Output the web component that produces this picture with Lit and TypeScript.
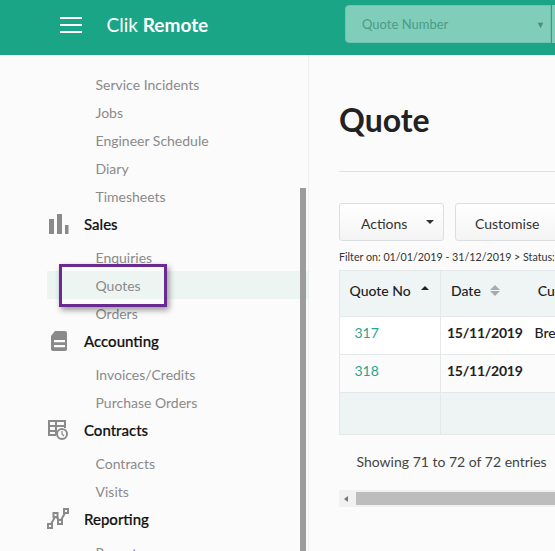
import { LitElement, html, css, svg } from "lit";
import { customElement } from "lit/decorators.js";

const icons = {
  sales: svg`<svg width="22" height="22" viewBox="0 0 22 22"><g fill="#8a8a8a"><rect x="2" y="6" width="5" height="15"/><rect x="10" y="1" width="5" height="20"/><rect x="18" y="12" width="3.500" height="9"/></g></svg>`,
  accounting: svg`<svg width="22" height="22" viewBox="0 0 22 22"><path fill="#8a8a8a" d="M8 1h10a2 2 0 0 1 2 2v16a2 2 0 0 1-2 2H6a2 2 0 0 1-2-2V6z"/><path fill="#fbfbfb" d="M7 10h11v2.200H7zM7 15h11v2.200H7z"/></svg>`,
  contracts: svg`<svg width="22" height="22" viewBox="0 0 22 22"><g fill="none" stroke="#8a8a8a" stroke-width="2"><path d="M9 16H2V2h16v7"/><path d="M2 7h16M2 12h7M9 2v14"/><circle cx="15" cy="15" r="5"/><path stroke-width="1.300" d="M15 12v3l2 2"/></g></svg>`,
  reporting: svg`<svg width="22" height="22" viewBox="0 0 22 22"><g fill="none" stroke="#8a8a8a" stroke-width="2"><rect x="1" y="16" width="4" height="4"/><rect x="6.500" y="5" width="4" height="4"/><rect x="11" y="12" width="4" height="4"/><rect x="17" y="1" width="4" height="4"/><path d="M4 16 8 9M9.500 9l2.500 3M14 12l4-7"/></g></svg>`,
};

type Entry = { label: string; icon?: keyof typeof icons; active?: boolean };
const nav: Entry[] = [
  { label: "Service Incidents" }, { label: "Jobs" }, { label: "Engineer Schedule" }, { label: "Diary" }, { label: "Timesheets" },
  { label: "Sales", icon: "sales" }, { label: "Enquiries" }, { label: "Quotes", active: true }, { label: "Orders" },
  { label: "Accounting", icon: "accounting" }, { label: "Invoices/Credits" }, { label: "Purchase Orders" },
  { label: "Contracts", icon: "contracts" }, { label: "Contracts" }, { label: "Visits" },
  { label: "Reporting", icon: "reporting" }, { label: "Reports" },
];

@customElement("app-root")
export class AppRoot extends LitElement {
  static styles = css`
    :host { display: block; width: 555px; height: 551px; overflow: hidden; position: relative; background: #fbfbfb; font-family: Lato, sans-serif; }
    .top { height: 55px; background: #1aa587; display: flex; align-items: center; color: #fff; white-space: nowrap; overflow: hidden; }
    .burger { flex: none; width: 22px; margin-left: 60px; margin-top: -5px; display: flex; flex-direction: column; gap: 5px; }
    .burger i { display: block; height: 2px; background: #fff; }
    .brand { margin-left: 24.500px; margin-top: -7px; font-size: 19px; width: 238.500px; flex: none; }
    .brand b { font-weight: 700; }
    .select { flex: none; width: 206px; height: 38px; margin-top: -7px; box-sizing: border-box; background: #80cdb9; border: 1px solid #6fc5af; border-radius: 4px 0 0 4px; display: flex; align-items: center; justify-content: space-between; padding: 0 5px 0 16px; font-size: 13px; color: #4c9c87; }
    .select span { font-size: 9px; color: #4c8c7c; }
    .select2 { flex: none; width: 20px; height: 38px; margin-top: -7px; margin-left: 1px; background: #80cdb9; }
    .body { display: flex; height: 496px; }
    .side { width: 309px; flex: none; box-sizing: border-box; border-right: 1px solid #eeeeee; padding-top: 15px; overflow: hidden; }
    .item { height: 28px; margin-left: 47px; padding-left: 48.500px; display: flex; align-items: center; font-size: 14px; color: #8a8a8a; }
    .item.active { background: #edf5f3; }
    .head { height: 28px; display: flex; align-items: center; font-size: 15px; font-weight: 500; color: #111; margin-bottom: 5px; margin-left: 47px; gap: 15px; -webkit-text-stroke: 0.2px #111; }
    .head svg { display: block; margin-bottom: 1px; }
    .main { flex: 1; min-width: 0; padding-left: 30px; overflow: hidden; white-space: nowrap; }
    h1 { margin: 42px 0 0; font-size: 32px; line-height: 46px; font-weight: 700; color: #222; }
    .rule { height: 1px; background: #dde2e1; margin-top: 28px; width: 260px; }
    .tools { display: flex; gap: 11px; margin-top: 31px; }
    .btn { height: 38px; box-sizing: border-box; border: 1px solid #dcdfdf; border-radius: 3px; background: linear-gradient(#ffffff, #f4f4f4); display: flex; align-items: center; font-size: 14px; color: #333; padding-left: 21px; padding-top: 2px; flex: none; }
    .b1 { width: 105px; gap: 19px; }
    .b2 { width: 130px; padding-left: 19px; }
    .caret { width: 0; height: 0; margin-top: -3px; border-left: 4px solid transparent; border-right: 4px solid transparent; border-top: 4px solid #333; }
    .filter { font-size: 10.700px; line-height: 14px; margin-top: 9px; color: #333; }
    .table { display: grid; grid-template-columns: 101px 1fr; grid-template-rows: 46px 38px 38px 42px; margin-top: 6px; width: 260px; border-top: 1px solid #e4e8e8; border-left: 1px solid #e4e8e8; box-sizing: border-box; font-size: 14px; color: #333; }
    .c { display: flex; align-items: center; border-bottom: 1px solid #e4e8e8; border-right: 1px solid #e4e8e8; box-sizing: border-box; overflow: hidden; background: #fff; }
    .h { background: #eff4f4; font-weight: 500; color: #222; padding: 0 0 6px 9.500px; gap: 10px; }
    .h .up { margin-top: -5px; width: 0; height: 0; border-left: 4.500px solid transparent; border-right: 4.500px solid transparent; border-bottom: 4.500px solid #222; }
    .sort { display: flex; flex-direction: column; gap: 1.500px; }
    .sort i { display: block; width: 0; height: 0; border-left: 5px solid transparent; border-right: 5px solid transparent; }
    .sort i:first-child { border-bottom: 5px solid #aaa; }
    .sort i:last-child { border-top: 5px solid #aaa; }
    .h2 { padding-left: 10px; gap: 9px; }
    .cu { margin-left: 29px; }
    .num { padding: 0 0 6px 14.500px; color: #1fa78f; }
    .date { padding: 0 0 6px 6px; font-weight: 700; gap: 12px; color: #222; letter-spacing: -0.25px; }
    .date span { font-weight: 500; letter-spacing: 0; }
    .white2 { background: #fbfbfb; }
    .foot { background: #eef3f3; }
    .showing { font-size: 14px; color: #444; margin: 17px 0 0 17.500px; line-height: 20px; }
    .hbar { height: 17px; margin-top: 18px; background: #f1f1f1; display: flex; align-items: center; padding-left: 5px; gap: 8px; width: 260px; }
    .hbar .l { width: 0; height: 0; border-top: 3.500px solid transparent; border-bottom: 3.500px solid transparent; border-right: 4px solid #777; }
    .hbar .t { flex: 1; height: 13px; background: #bdbdbd; }
    .vscroll { position: absolute; left: 300px; top: 188px; width: 6px; bottom: 0; background: #9c9c9c; }
    .mark { position: absolute; left: 59px; top: 264px; width: 108px; height: 43px; box-sizing: border-box; border: 3px solid #6a2a90; box-shadow: 2px 3px 6px rgba(0,0,0,.4); }
  `;

  render() {
    return html`
      <div class="top">
        <div class="burger"><i></i><i></i><i></i></div>
        <div class="brand">Clik <b>Remote</b></div>
        <div class="select">Quote Number<span>▼</span></div>
        <div class="select2"></div>
      </div>
      <div class="body">
        <nav class="side">
          ${nav.map((e) => e.icon
            ? html`<div class="head">${icons[e.icon]}${e.label}</div>`
            : html`<div class="item ${e.active ? "active" : ""}">${e.label}</div>`)}
        </nav>
        <main class="main">
          <h1>Quote</h1>
          <div class="rule"></div>
          <div class="tools">
            <div class="btn b1">Actions <span class="caret"></span></div>
            <div class="btn b2">Customise</div>
          </div>
          <div class="filter">Filter on: 01/01/2019 - 31/12/2019 &gt; Status:</div>
          <div class="table">
            <div class="c h">Quote No <span class="up"></span></div>
            <div class="c h h2">Date <span class="sort"><i></i><i></i></span><span class="cu">Cu</span></div>
            <div class="c num">317</div>
            <div class="c date">15/11/2019 <span>Bre</span></div>
            <div class="c num white2">318</div>
            <div class="c date white2">15/11/2019</div>
            <div class="c foot"></div>
            <div class="c foot"></div>
          </div>
          <div class="showing">Showing 71 to 72 of 72 entries</div>
          <div class="hbar"><span class="l"></span><span class="t"></span></div>
        </main>
      </div>
      <div class="vscroll"></div>
      <div class="mark"></div>
    `;
  }
}
